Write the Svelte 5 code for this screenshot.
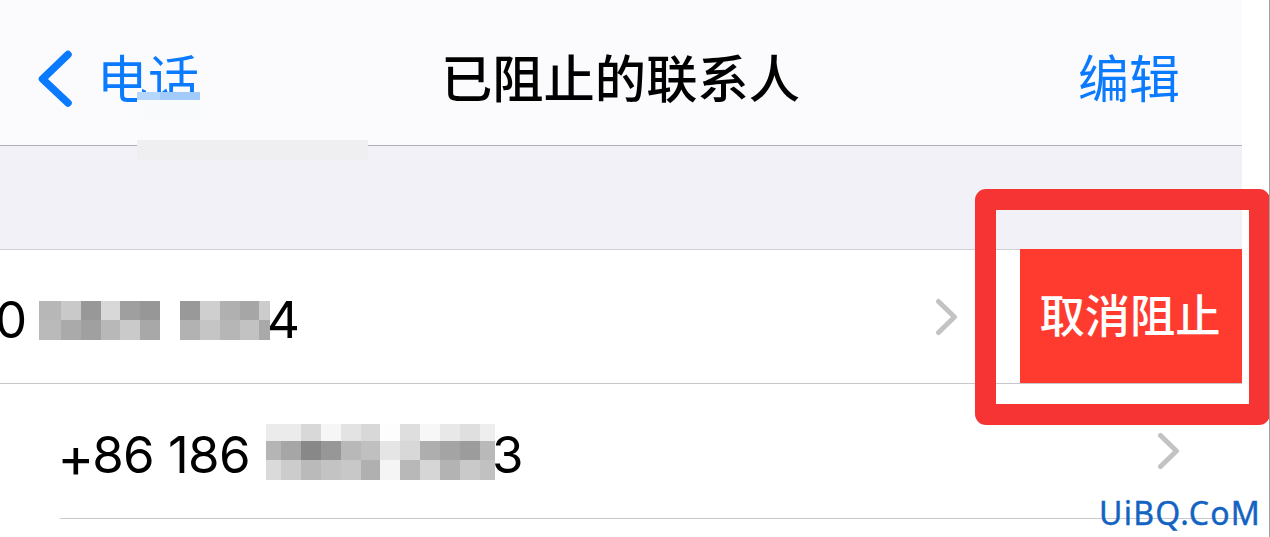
<script lang="ts">
  type Mosaic = { cols: number[]; rows: number[]; cells: string[][] };

  // column and row edges of the blocks, then one shade per block
  const firstMosaic: Mosaic = {
    cols: [0, 22, 42, 62, 81, 101, 121],
    rows: [0, 19, 39],
    cells: [
      ['#b7b7b7', '#c9c9c9', '#989898', '#d8d8d8', '#9f9f9f', '#979797'],
      ['#bababa', '#aaaaaa', '#a0a0a0', '#b8b8b8', '#cacaca', '#a8a8a8'],
    ],
  };
  const secondMosaic: Mosaic = {
    cols: [0, 20, 40, 60, 79, 90],
    rows: [0, 19, 39],
    cells: [
      ['#999999', '#cfcfcf', '#b0b0b0', '#a6a6a6', '#cccccc'],
      ['#b2b2b2', '#c5c5c5', '#b6b6b6', '#c2c2c2', '#a9a9a9'],
    ],
  };
  const wideMosaic: Mosaic = {
    cols: [0, 15, 35, 55, 75, 95, 114, 134, 154, 174, 194, 214, 229],
    rows: [0, 17, 36, 56],
    cells: [
      ['#ebebeb', '#ebebeb', '#d8d8d8', '#f6f6f6', '#e3e3e3', '#d8d8d8', '#fdfdfd', '#dedede', '#f7f7f7', '#e8e8e8', '#dfdfdf', '#eeeeee'],
      ['#b5b5b5', '#a6a6a6', '#888888', '#979797', '#b8b8b8', '#c0c0c0', '#e5e5e5', '#d8d8d8', '#aeaeae', '#a4a4a4', '#9c9c9c', '#b9b9b9'],
      ['#dadada', '#cccccc', '#bababa', '#c3c3c3', '#c8c8c8', '#b0b0b0', '#f5f5f5', '#b8b8b8', '#d6d6d6', '#b3b3b3', '#c9c9c9', '#c1c1c1'],
    ],
  };
</script>

{#snippet mosaic(m: Mosaic)}
  <svg class="mosaic" width={m.cols[m.cols.length - 1]} height={m.rows[m.rows.length - 1]} shape-rendering="crispEdges">
    {#each m.cells as line, r}
      {#each line as shade, c}
        <rect x={m.cols[c]} y={m.rows[r]} width={m.cols[c + 1] - m.cols[c]} height={m.rows[r + 1] - m.rows[r]} fill={shade} />
      {/each}
    {/each}
  </svg>
{/snippet}

{#snippet chevron()}
  <svg class="chevron" width="24" height="38" viewBox="0 0 24 38">
    <path d="M3.5 3.5 L19.5 19 L3.5 34.5" />
  </svg>
{/snippet}

<div class="page">
  <div class="screen">
    <header class="navbar">
      <button class="back">
        <svg width="36" height="58" viewBox="0 0 36 58">
          <path d="M31 4.5 L5.5 29 L31 53" />
        </svg>
        <span>电话</span>
      </button>
      <h1>已阻止的联系人</h1>
      <button class="edit">编辑</button>
      <div class="smudge smudge-text"></div>
      <div class="smudge smudge-soft"></div>
      <div class="smudge smudge-line"></div>
    </header>

    <div class="spacer"></div>

    <div class="row row-swiped">
      <div class="content">
        <span class="digit-first">0</span>
        {@render mosaic(firstMosaic)}
        {@render mosaic(secondMosaic)}
        <span class="digit-last">4</span>
        {@render chevron()}
      </div>
      <button class="unblock">取消阻止</button>
    </div>

    <div class="row row-plain">
      <span class="number"><span class="plus">+</span>86 186</span>
      {@render mosaic(wideMosaic)}
      <span class="digit-last">3</span>
      {@render chevron()}
    </div>
  </div>

  <div class="highlight"></div>
  <div class="watermark">UiBQ.CoM</div>
</div>

<style>
  .page {
    position: relative;
    box-sizing: border-box;
    width: 1270px;
    height: 537px;
    overflow: hidden;
    background: #fff;
    border-right: 1px solid #a0a0a0;
    font-family: Inter, 'Noto Sans CJK SC', sans-serif;
    color: #000;
  }

  .screen {
    width: 1242px;
  }

  button {
    padding: 0;
    border: none;
    background: none;
    font-family: inherit;
    white-space: nowrap;
  }

  .navbar {
    position: relative;
    box-sizing: border-box;
    display: grid;
    grid-template-columns: 1fr auto 1fr;
    align-items: center;
    height: 146px;
    padding: 12px 62px 0 37px;
    background: #fbfbfd;
    border-bottom: 1px solid #b0b0b8;
  }

  h1 {
    margin: 0 0 6px 24px;
    font-family: 'Noto Sans CJK SC', sans-serif;
    font-size: 51.3px;
    font-weight: 500;
    line-height: 60px;
  }

  .back,
  .edit {
    font-family: 'Noto Sans CJK SC', sans-serif;
    font-size: 51px;
    line-height: 60px;
    color: #0a7aff;
  }

  .back {
    display: flex;
    align-items: center;
    gap: 24px;
  }

  .back span,
  .edit {
    margin-bottom: 6px;
  }

  .back path {
    fill: none;
    stroke: #0a7aff;
    stroke-width: 7.5;
    stroke-linecap: round;
    stroke-linejoin: round;
  }

  .edit {
    justify-self: end;
  }

  .smudge {
    position: absolute;
    left: 137px;
  }

  .smudge-text {
    top: 92px;
    width: 63px;
    height: 8px;
    background: linear-gradient(to right, #b7d6fb 23px, #a2cbfa 23px);
  }

  .smudge-soft {
    top: 100px;
    width: 63px;
    height: 20px;
    background: #f8fafc;
  }

  .smudge-line {
    top: 140px;
    width: 231px;
    height: 20px;
    background: #efeff2;
  }

  .spacer {
    height: 103px;
    background: #f2f1f7;
    border-bottom: 1px solid #d0d0d4;
  }

  .row {
    display: flex;
    align-items: center;
    font-size: 51px;
    line-height: 60px;
    font-feature-settings: 'calt' 0;
  }

  .row-swiped {
    height: 133px;
    border-bottom: 1px solid #c8c8ca;
  }

  .content {
    flex: 1;
    display: flex;
    align-items: center;
    padding: 7px 61px 0 0;
  }

  .content .mosaic + .mosaic {
    margin-left: 20px;
  }

  .digit-first {
    width: 39px;
    margin-left: -5px;
    margin-right: 5px;
  }

  .digit-last {
    margin-left: -3px;
  }

  .mosaic {
    flex: none;
  }

  .chevron {
    flex: none;
    margin-left: auto;
  }

  .chevron path {
    fill: none;
    stroke: #c3c3c5;
    stroke-width: 5;
    stroke-linecap: round;
    stroke-linejoin: round;
  }

  .content .chevron {
    margin-top: -7px;
  }

  .unblock {
    width: 222px;
    height: 134px;
    margin-top: -1px;
    padding: 0 2px 6px 0;
    background: #ff3b30;
    color: #fff;
    font-family: 'Noto Sans CJK SC', sans-serif;
    font-size: 45.3px;
    font-weight: 500;
  }

  .row-plain {
    height: 134px;
    margin-left: 60px;
    padding-right: 61px;
    border-bottom: 1px solid #c8c8ca;
  }

  .number,
  .row-plain .digit-last {
    padding-top: 8px;
  }

  .row-plain .mosaic {
    margin-top: 2px;
  }

  .number {
    width: 206px;
    margin-left: -1px;
    margin-right: 1px;
    letter-spacing: -0.6px;
    white-space: nowrap;
  }

  .plus {
    display: inline-block;
    transform: translateY(2px) scale(1.1);
  }

  .highlight {
    position: absolute;
    left: 975px;
    top: 189px;
    box-sizing: border-box;
    width: 295px;
    height: 236px;
    border: 21px solid #f73434;
    border-radius: 11px;
  }

  .watermark {
    position: absolute;
    left: 1099px;
    top: 493px;
    font-family: 'Noto Sans', sans-serif;
    font-size: 32px;
    line-height: 40px;
    letter-spacing: 1.3px;
    color: #1263c2;
    -webkit-text-stroke: 0.4px #1263c2;
  }
</style>
